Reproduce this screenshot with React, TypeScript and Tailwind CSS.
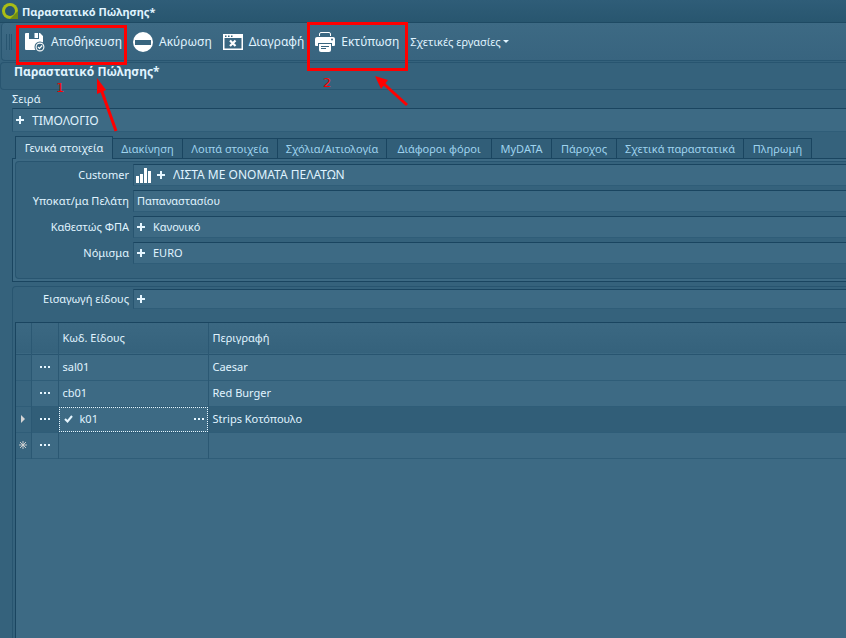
import React, { useState } from "react";

const TABS = [
  { label: "Γενικά στοιχεία", width: "w-[98px]" },
  { label: "Διακίνηση", width: "w-[70px]" },
  { label: "Λοιπά στοιχεία", width: "w-[95px]" },
  { label: "Σχόλια/Αιτιολογία", width: "w-[109px]" },
  { label: "Διάφοροι φόροι", width: "w-[105px]" },
  { label: "MyDATA", width: "w-[60px]" },
  { label: "Πάροχος", width: "w-[65px]" },
  { label: "Σχετικά παραστατικά", width: "w-[127px]" },
  { label: "Πληρωμή", width: "w-[68px]" },
];

const ITEMS = [
  { code: "sal01", name: "Caesar" },
  { code: "cb01", name: "Red Burger" },
  { code: "k01", name: "Strips Κοτόπουλο" },
];

function Plus() {
  return (
    <svg width="8" height="8" viewBox="0 0 8 8" className="shrink-0" shapeRendering="crispEdges" aria-hidden="true">
      <path d="M3 0h2v3h3v2H5v3H3V5H0V3h3z" fill="#e6f6ff" />
    </svg>
  );
}

function Dots() {
  return (
    <svg width="10" height="2" viewBox="0 0 10 2" className="block" shapeRendering="crispEdges" aria-hidden="true">
      <path d="M0 0h2v2H0zM4 0h2v2H4zM8 0h2v2H8z" fill="#e6f6ff" />
    </svg>
  );
}

function Chart() {
  return (
    <svg width="15" height="15" viewBox="0 0 15 15" className="mt-px shrink-0" shapeRendering="crispEdges" aria-hidden="true">
      <path d="M0 8h3v7H0zM4 6h3v9H4zM8 0h3v15H8zM12 3h3v12h-3z" fill="#fff" />
    </svg>
  );
}

function SaveIcon() {
  return (
    <svg width="22" height="20" viewBox="0 0 22 20" aria-hidden="true">
      <path d="M3 1h3v6h10V1h1l3 3v14H3a1 1 0 0 1-1-1V2a1 1 0 0 1 1-1z" fill="#fff" />
      <path d="M11.500 1H15v5h-3.500z" fill="#fff" />
      <circle cx="17" cy="15" r="5.500" fill="#3a6781" />
      <circle cx="17" cy="15" r="3.900" fill="none" stroke="#fff" strokeWidth="1.100" />
      <path d="m15 15 1.500 1.500 2.700-3" fill="none" stroke="#fff" strokeWidth="1.200" />
    </svg>
  );
}

function CancelIcon() {
  return (
    <svg width="20" height="20" viewBox="0 0 20 20" aria-hidden="true">
      <circle cx="10" cy="10" r="10" fill="#fff" />
      <path d="M2 8h16v5H2z" fill="#38657f" />
    </svg>
  );
}

function DeleteIcon() {
  return (
    <svg width="20" height="16" viewBox="0 0 20 16" aria-hidden="true">
      <path fillRule="evenodd" d="M0 0h20v16H0zM1.500 4v10.500h17V4z" fill="#fff" />
      <path d="M2 1.500h1.500V3H2zM5 1.500h1.500V3H5zM8 1.500h1.500V3H8z" fill="#38657f" />
      <path d="m7 6.500 5.500 5.500M12.500 6.500 7 12" stroke="#fff" strokeWidth="2.200" />
    </svg>
  );
}

function PrintIcon() {
  return (
    <svg width="20" height="20" viewBox="0 0 20 20" aria-hidden="true">
      <path d="M4.500 4V2a1.500 1.500 0 0 1 1.500-1.500h8A1.500 1.500 0 0 1 15.500 2v2" fill="none" stroke="#fff" />
      <path d="M2 5h16a2 2 0 0 1 2 2v6a1 1 0 0 1-1 1h-2v-3H3v3H1a1 1 0 0 1-1-1V7a2 2 0 0 1 2-2z" fill="#fff" />
      <path d="M4 11h12v7a2 2 0 0 1-2 2H6a2 2 0 0 1-2-2z" fill="#fff" />
      <path d="M3 11.500h14M6 14.500h8M6 16.500h5" stroke="#38657f" />
      <circle cx="17" cy="7.500" r="1" fill="#38657f" />
    </svg>
  );
}

function ToolButton({ label, icon }: { label: string; icon: React.ReactNode }) {
  return (
    <button type="button" className="flex h-6 shrink-0 items-center gap-1.5 text-[12px] whitespace-nowrap">
      {icon}
      {label}
    </button>
  );
}

type FieldProps = {
  id: string;
  label: string;
  value: string;
  chart?: boolean;
  plus?: boolean;
  large?: boolean;
  short?: boolean;
};

function Field({ id, label, value, chart, plus, large, short }: FieldProps) {
  return (
    <div className={"flex items-stretch " + (short ? "h-5" : "h-[22px]")}>
      <label htmlFor={id} className="flex w-[117px] shrink-0 items-center justify-end pr-1">
        {label}
      </label>
      <div
        className={
          "flex min-w-0 flex-1 items-center gap-1.5 border-t border-b border-l border-t-[#1a4560] border-b-[#2f5d78] border-l-[#285570] bg-[#3d6a84] " +
          (chart ? "pl-0.5" : "pl-[3px]")
        }
      >
        {chart && <Chart />}
        {plus && <Plus />}
        <input
          id={id}
          defaultValue={value}
          className={"min-w-0 flex-1 bg-transparent outline-none " + (plus ? "pl-0.5 " : "") + (large ? "text-[12px]" : "")}
        />
      </div>
    </div>
  );
}

export default function App() {
  const [tab, setTab] = useState(0);
  return (
    <div className="relative flex min-h-screen flex-col overflow-hidden bg-[#35627c] font-['Noto_Sans','Open_Sans',sans-serif] text-[11px] leading-4 text-[#e0f4ff]">
      <header className="flex h-[23px] items-center gap-[3px] border-b border-[#1e4a63] bg-linear-to-b from-[#2f5d78] to-[#28566f] pt-px pl-0.5 font-bold">
        <svg width="17" height="17" viewBox="0 0 17 17" aria-hidden="true">
          <path d="M8 0a8 8 0 0 1 8 8v8H8A8 8 0 0 1 8 0z" fill="#a9bd16" />
          <path d="M8 16h8V8z" fill="#6f8d16" />
          <circle cx="8" cy="8" r="5" fill="#285570" />
        </svg>
        Παραστατικό Πώλησης*
      </header>

      <nav aria-label="Εργαλεία" className="ml-px flex h-[38px] items-center gap-[11px] rounded-l border-b border-l border-[#285570] bg-linear-to-b from-[#3d6a84] to-[#38647f] pl-1">
        <div className="flex h-4 w-1.5 justify-between border-x border-[#285570]">
          <span className="mx-auto w-px bg-[#285570]" />
        </div>
        <ToolButton label="Αποθήκευση" icon={<SaveIcon />} />
        <ToolButton label="Ακύρωση" icon={<CancelIcon />} />
        <ToolButton label="Διαγραφή" icon={<DeleteIcon />} />
        <ToolButton label="Εκτύπωση" icon={<PrintIcon />} />
        <button type="button" className="flex items-center gap-0.5 whitespace-nowrap">
          Σχετικές εργασίες
          <svg width="6" height="3" viewBox="0 0 6 3" aria-hidden="true">
            <path d="M0 0h6L3 3z" fill="#e0f4ff" />
          </svg>
        </button>
      </nav>

      <h1 className="mt-px h-7 rounded-l border-y border-l border-[#285570] pl-[13px] text-[12px] leading-[18px] font-bold">
        Παραστατικό Πώλησης*
      </h1>

      <main className="flex flex-1 flex-col pl-3">
        <label htmlFor="series" className="mt-px h-[17px] leading-4">
          Σειρά
        </label>
        <div className="flex h-6 items-center gap-2 border-t border-b border-l border-t-[#1a4560] border-b-[#2f5d78] border-l-[#285570] bg-[#3d6a84] pl-[3px]">
          <Plus />
          <input id="series" defaultValue="ΤΙΜΟΛΟΓΙΟ" className="min-w-0 flex-1 bg-transparent pt-px text-[12px] outline-none" />
        </div>

        <div role="tablist" className="mt-1 flex h-[22px] items-end pl-[3px]">
          {TABS.map((t, i) => (
            <button
              key={t.label}
              type="button"
              role="tab"
              aria-selected={tab === i}
              onClick={() => setTab(i)}
              className={
                t.width +
                " shrink-0 border-t border-r border-[#1a4560] whitespace-nowrap " +
                (tab === i ? "relative z-10 -mb-px h-[23px] border-l bg-[#3a6781]" : "h-5 bg-[#315e78] text-[#9fd3ee]")
              }
            >
              {t.label}
            </button>
          ))}
        </div>
        <section className="border-y border-l border-[#1a4560] bg-[#3d6a84] py-0.5 pl-0.5">
          <div className="flex h-[118px] flex-col gap-1 rounded-l border-y border-l border-[#285570] bg-[#35627c] pt-0.5">
            <Field id="customer" label="Customer" value="ΛΙΣΤΑ ΜΕ ΟΝΟΜΑΤΑ ΠΕΛΑΤΩΝ" chart plus large />
            <Field id="branch" label="Υποκατ/μα Πελάτη" value="Παπαναστασίου" />
            <Field id="vat" label="Καθεστώς ΦΠΑ" value="Κανονικό" plus />
            <Field id="currency" label="Νόμισμα" value="EURO" plus />
          </div>
        </section>

        <section className="mt-1 flex flex-1 flex-col rounded-tl border-t border-l border-[#285570] pt-0.5 pl-0.5">
          <div className="pl-px">
            <Field id="add" label="Εισαγωγή είδους" value="" plus short />
          </div>
          <div className="mt-[13px] flex-1 border-t border-l border-[#1a4560] bg-[#3d6a84]">
            <table className="w-full table-fixed border-collapse text-left">
              <colgroup>
                <col className="w-[15px]" />
                <col className="w-[27px]" />
                <col className="w-[150px]" />
                <col />
              </colgroup>
              <thead>
                <tr className="h-[31px] border-b border-[#285570] bg-linear-to-b from-[#3b6882] to-[#35627c]">
                  <th className="border-r border-[#2b5873]" />
                  <th className="border-r border-[#2b5873]" />
                  <th className="border-r border-[#2b5873] pl-1 font-normal">Κωδ. Είδους</th>
                  <th className="pl-1 font-normal">Περιγραφή</th>
                </tr>
              </thead>
              <tbody>
                {ITEMS.map((item, i) => (
                  <tr key={item.code} className={"h-[26px] border-b border-[#2f5d78] " + (i === 2 ? "bg-[#315e78]" : "")}>
                    <td className="border-r border-[#2b5873] bg-[#38657f] p-0">
                      {i === 2 && (
                        <svg width="4" height="8" viewBox="0 0 4 8" className="mx-auto block" aria-hidden="true">
                          <path d="M0 0l4 4-4 4z" fill="#d5d5d5" />
                        </svg>
                      )}
                    </td>
                    <td className="border-r border-[#2b5873] py-0 pr-0 pl-2">
                      <Dots />
                    </td>
                    <td className="border-r border-[#2b5873] p-0">
                      {i === 2 ? (
                        <div className="flex h-[25px] items-center border border-dotted border-[#e6f6ff] bg-[#3d6a84] pr-[3px] pl-1">
                          <svg width="9" height="8" viewBox="0 0 9 8" aria-hidden="true">
                            <path d="M1 4l2.500 2.500L8 1" fill="none" stroke="#e6f6ff" strokeWidth="2" />
                          </svg>
                          <span className="flex-1 pl-[7px]">{item.code}</span>
                          <Dots />
                        </div>
                      ) : (
                        <span className="pl-1">{item.code}</span>
                      )}
                    </td>
                    <td className="py-0 pl-1">{item.name}</td>
                  </tr>
                ))}
                <tr className="h-[26px] border-b border-[#2f5d78]">
                  <td className="border-r border-[#2b5873] bg-[#38657f] p-0">
                    <svg width="8" height="8" viewBox="0 0 8 8" className="mx-auto block" aria-hidden="true">
                      <path d="M4 0v8M0 4h8M1 1l6 6M7 1L1 7" stroke="#d5d5d5" strokeWidth="0.900" />
                    </svg>
                  </td>
                  <td className="border-r border-[#2b5873] py-0 pr-0 pl-2">
                    <Dots />
                  </td>
                  <td className="border-r border-[#2b5873]" />
                  <td />
                </tr>
              </tbody>
            </table>
          </div>
        </section>
      </main>

      <div className="pointer-events-none absolute top-0 left-0 font-['DejaVu_Sans',sans-serif] text-[13px] text-[#ff0000]">
        <div className="absolute top-[25px] left-4 h-10 w-[111px] border-3 border-[#ff0000]" />
        <div className="absolute top-[22px] left-[307px] h-[49px] w-[101px] border-3 border-[#ff0000]" />
        <span className="absolute top-20 left-14">1</span>
        <span className="absolute top-[75px] left-[323px]">2</span>
        <svg width="420" height="140" viewBox="0 0 420 140" className="absolute top-0 left-0 max-w-none" aria-hidden="true">
          <path d="M116 131 101 89M407 105 384 84" stroke="#ff0000" strokeWidth="3" />
          <path d="M97 78l9 12-9 4zM375 76l13 4-7 9z" fill="#ff0000" />
        </svg>
      </div>
    </div>
  );
}
